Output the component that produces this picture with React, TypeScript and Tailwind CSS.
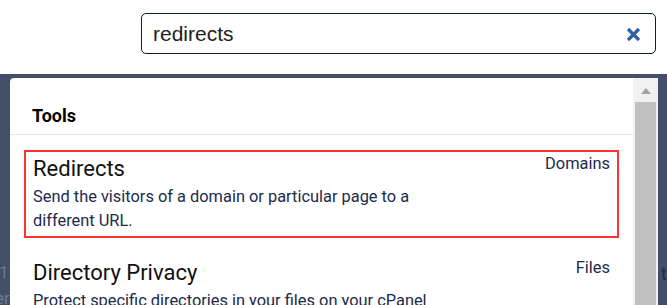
export default function App() {
  const items = [
    {
      title: "Redirects",
      category: "Domains",
      desc: "Send the visitors of a domain or particular page to a different URL.",
      active: true,
    },
    {
      title: "Directory Privacy",
      category: "Files",
      desc: "Protect specific directories in your files on your cPanel account.",
      active: false,
    },
  ];

  return (
    <div className="w-[667px] h-[305px] overflow-hidden bg-white flex flex-col" style={{ fontFamily: "Roboto, sans-serif" }}>
      {/* Search bar */}
      <div className="h-[74px] shrink-0 flex pt-[13px] pl-[141px] pr-[11px]">
        <div className="flex-1 h-[41px] border border-[#0d1b3a] rounded-[5px] flex items-center pl-[11px] pr-[14px]">
          <span className="flex-1 text-[21px] text-[#222] leading-none" style={{ fontFamily: '"Liberation Sans", Arial, sans-serif' }}>
            redirects
          </span>
          <svg width="15" height="15" viewBox="0 0 15 15" className="mt-[1px]">
            <path d="M2 2 L13 13 M13 2 L2 13" stroke="#2e5ea6" strokeWidth="3.2" strokeLinecap="butt" />
          </svg>
        </div>
      </div>

      {/* Overlay area */}
      <div className="flex-1 bg-[#434e68] relative flex pt-[4px] pl-[10px] pr-[9px]">
        {/* page text behind overlay */}
        <span className="absolute left-[-1px] top-[188px] text-[17px] leading-[20px] text-[#6d7a95]">1</span>
        <span className="absolute left-[-5px] top-[214px] text-[17px] leading-[20px] text-[#6d7a95]">er</span>
        <span className="absolute left-[661px] top-[190px] text-[18px] leading-[20px] text-[#1b2b4b]">t</span>

        <div className="flex-1 bg-white rounded-tl-[4px] flex overflow-hidden">
          <div className="flex-1 flex flex-col">
            <div className="h-[57px] shrink-0 border-b border-[#e6e6e6] flex items-end pl-[22px] pb-[7px]">
              <span className="text-[18px] font-bold text-black leading-[22px]">Tools</span>
            </div>
            <div className="flex flex-col gap-[16px] pt-[15px] px-[14px]">
              {items.map((it) => (
                <div
                  key={it.title}
                  className={`border-2 ${it.active ? "border-[#ff3333]" : "border-transparent"} pl-[7px] pr-[7px] pt-[4px] pb-[3px] flex`}
                >
                  <div className="flex-1">
                    <div className="text-[22px] leading-[26px] text-[#111]">{it.title}</div>
                    <div className="text-[16.4px] leading-[24px] text-[#1b2b4b] max-w-[420px] mt-[3px]">{it.desc}</div>
                  </div>
                  <div className="text-[16.4px] leading-[24px] text-[#1b2b4b] -mt-[4px]">{it.category}</div>
                </div>
              ))}
            </div>
          </div>
          {/* scrollbar */}
          <div className="w-[25px] shrink-0 bg-[#f1f1f1] flex flex-col items-center pt-[10px]">
            <svg width="10" height="6" viewBox="0 0 10 6">
              <path d="M0 6 L5 0 L10 6 Z" fill="#a3a3a3" />
            </svg>
            <div className="w-[21px] flex-1 bg-[#c1c1c1] mt-[8px]" />
          </div>
        </div>
      </div>
    </div>
  );
}
